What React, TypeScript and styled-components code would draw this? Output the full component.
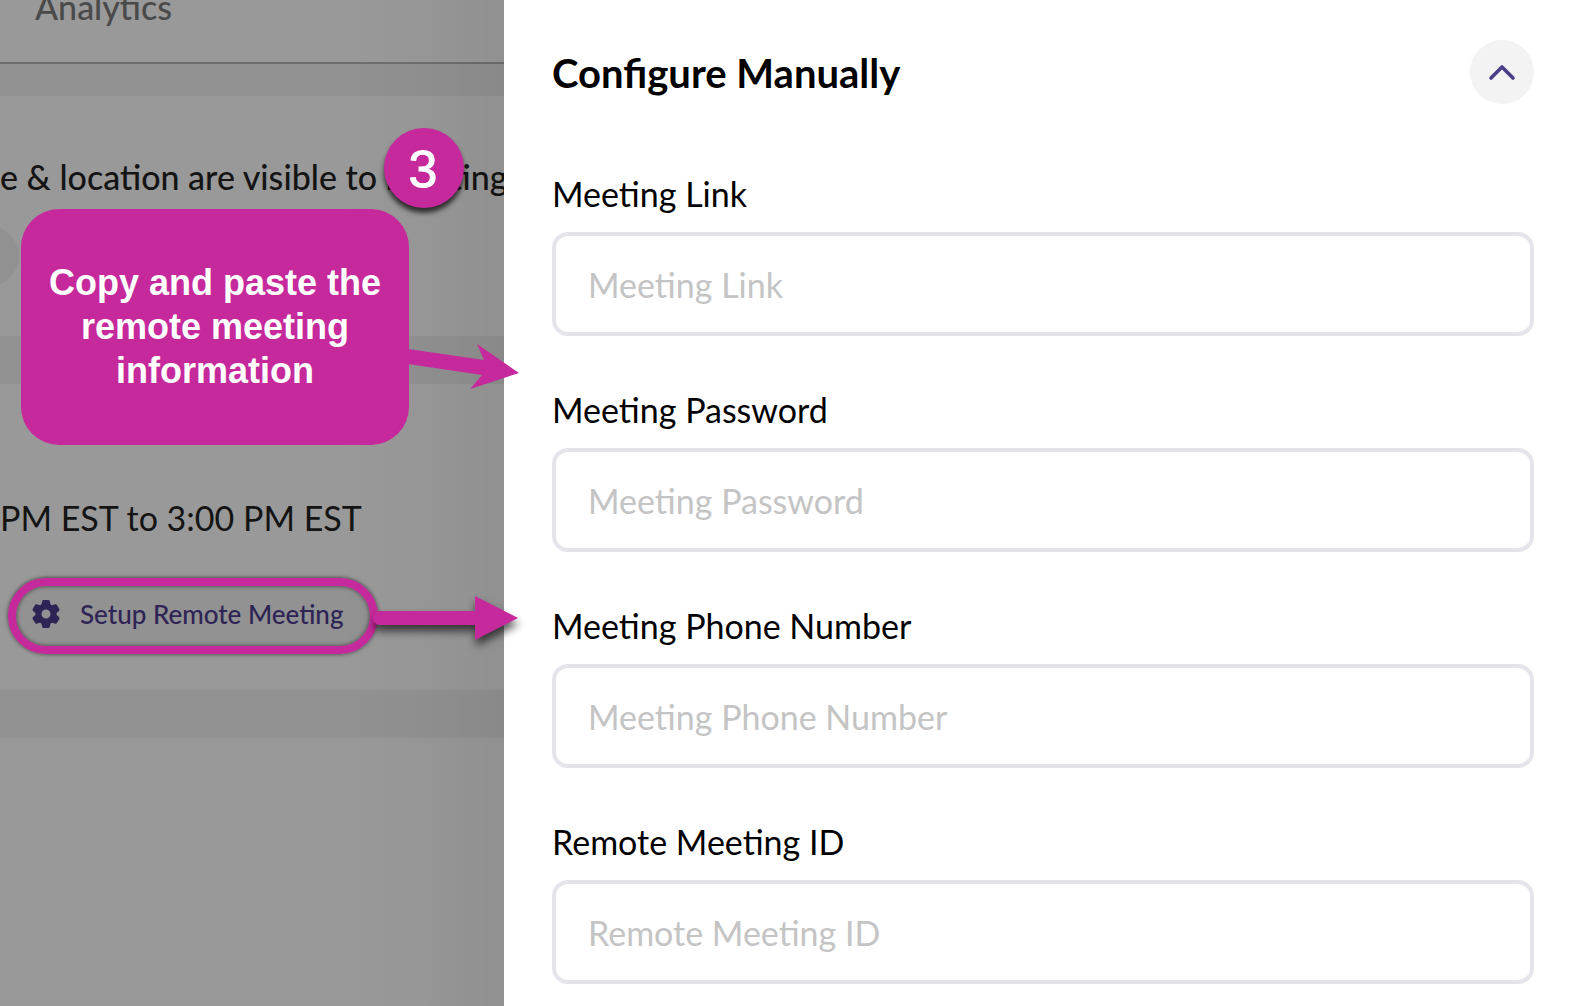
import React from "react";
import styled, { createGlobalStyle } from "styled-components";

const accent = "#c6299b";

const GlobalStyle = createGlobalStyle`
  *, *::before, *::after { box-sizing: border-box; }
  body {
    margin: 0;
    background: #fff;
    font-family: Lato, "Open Sans", sans-serif;
  }
`;

const Page = styled.div`
  position: relative;
  display: grid;
  grid-template-columns: 504px minmax(0, 1fr);
  min-height: 100vh;
  overflow: hidden;
`;

const Backdrop = styled.main`
  position: relative;
  display: flex;
  flex-direction: column;
  min-width: 0;
  overflow: hidden;
  background: #999;
  color: #141414;

  &::after {
    content: "";
    position: absolute;
    inset: 0 0 0 auto;
    width: 170px;
    background: linear-gradient(to right, transparent, rgba(0, 0, 0, 0.02) 50%, rgba(0, 0, 0, 0.06));
    pointer-events: none;
  }
`;

const TabBar = styled.nav`
  height: 64px;
  padding-left: 35px;
  border-bottom: 2px solid #6e6e6e;
`;

const Tab = styled.a`
  display: block;
  margin-top: -15px;
  font-size: 34px;
  line-height: 44px;
  font-weight: 500;
  color: #4a4a4a;
  text-decoration: none;
`;

const Band = styled.div<{ $height: number }>`
  flex: none;
  height: ${(p) => p.$height}px;
  background: #919191;
`;

const Section = styled.section<{ $height: number }>`
  flex: none;
  height: ${(p) => p.$height}px;
  overflow: hidden;
`;

const Line = styled.p<{ $top: number; $weight: number }>`
  margin: 0;
  padding-top: ${(p) => p.$top}px;
  font-size: 34px;
  line-height: 44px;
  font-weight: ${(p) => p.$weight};
  white-space: nowrap;
`;

const RoundToggle = styled.button`
  display: block;
  width: 60px;
  height: 60px;
  margin: 27px 0 0 -41px;
  border: 0;
  border-radius: 50%;
  background: #919191;
`;

const SetupButton = styled.button`
  display: flex;
  align-items: center;
  gap: 20px;
  width: 370px;
  height: 76px;
  margin: 36px 0 0 8px;
  padding: 0 24px;
  border: 0;
  border-radius: 38px;
  background: #929292;
  color: #2e2455;
  font: 500 26px/32px Lato, "Open Sans", sans-serif;
  white-space: nowrap;
`;

const Drawer = styled.aside`
  min-width: 0;
  padding: 40px 40px 22px 48px;
  background: #fff;
`;

const DrawerHeader = styled.header`
  display: flex;
  align-items: center;
  justify-content: space-between;
  height: 64px;
`;

const Title = styled.h2`
  margin: 0;
  padding-top: 2px;
  font-size: 40px;
  line-height: 48px;
  font-weight: 700;
  color: #000;
`;

const CollapseButton = styled.button`
  display: flex;
  align-items: center;
  justify-content: center;
  width: 64px;
  height: 64px;
  padding: 0;
  border: 0;
  border-radius: 50%;
  background: #f3f3f3;
  color: #4a3f87;
`;

const Form = styled.form`
  display: flex;
  flex-direction: column;
  gap: 52px;
  margin-top: 68px;
`;

const Field = styled.div`
  display: flex;
  flex-direction: column;
  gap: 16px;
`;

const Label = styled.label`
  font-size: 34px;
  line-height: 44px;
  color: #000;
`;

const Input = styled.input`
  width: 100%;
  height: 104px;
  padding: 0 32px;
  border: 4px solid #e5e4eb;
  border-radius: 16px;
  background: #fff;
  color: #000;
  font: 400 34px/44px Lato, "Open Sans", sans-serif;
  &::placeholder { color: #c4c4c4; opacity: 1; }
`;

const Callout = styled.div`
  position: absolute;
  left: 21px;
  top: 209px;
  display: flex;
  align-items: center;
  justify-content: center;
  width: 388px;
  height: 236px;
  border-radius: 38px;
  background: ${accent};
  color: #fff;
  font: 700 36px/44px "Liberation Sans", Arial, sans-serif;
  text-align: center;
`;

const StepBadge = styled.div`
  position: absolute;
  left: 384px;
  top: 128px;
  display: flex;
  align-items: center;
  justify-content: center;
  width: 80px;
  height: 80px;
  padding: 2px 2px 0 0;
  border-radius: 50%;
  background: ${accent};
  box-shadow: 0 5px 5px rgba(0, 0, 0, 0.7);
  color: #fff;
  font: 400 52px/60px "Liberation Sans", Arial, sans-serif;
  -webkit-text-stroke: 1px #fff;
`;

const Highlight = styled.div`
  position: absolute;
  left: 8px;
  top: 578px;
  width: 370px;
  height: 76px;
  border: 8px solid ${accent};
  border-radius: 38px;
  box-shadow: 0 0 4px rgba(0, 0, 0, 0.6), inset 0 0 4px rgba(0, 0, 0, 0.6);
  pointer-events: none;
`;

const Arrows = styled.svg`
  position: absolute;
  left: 360px;
  top: 330px;
  pointer-events: none;
`;

const StraightArrow = styled.path`
  filter: drop-shadow(1px 6px 4px rgba(0, 0, 0, 0.65));
`;

const GearIcon = () => (
  <svg width="28" height="28" viewBox="-14 -14 28 28" fill="currentColor" aria-hidden="true">
    <circle r="7.5" fill="none" stroke="currentColor" strokeWidth="6" />
    {[0, 60, 120, 180, 240, 300].map((angle) => (
      <path
        key={angle}
        transform={`rotate(${angle})`}
        d="M-5 -8 -3.700 -13Q-3.400 -14 -2.400 -14H2.400Q3.400 -14 3.700 -13L5 -8Z"
      />
    ))}
  </svg>
);

const fields = ["Meeting Link", "Meeting Password", "Meeting Phone Number", "Remote Meeting ID"];

export default function App() {
  return (
    <>
      <GlobalStyle />
      <Page>
        <Backdrop>
          <TabBar>
            <Tab href="#analytics">Analytics</Tab>
          </TabBar>
          <Band $height={32} />
          <Section $height={240}>
            <Line $top={59} $weight={500}>e &amp; location are visible to meeting</Line>
            <RoundToggle type="button" aria-label="Options" />
          </Section>
          <Band $height={48} />
          <Section $height={306}>
            <Line $top={112} $weight={400}>PM EST to 3:00 PM EST</Line>
            <SetupButton type="button">
              <GearIcon />
              Setup Remote Meeting
            </SetupButton>
          </Section>
          <Band $height={48} />
        </Backdrop>
        <Drawer>
          <DrawerHeader>
            <Title>Configure Manually</Title>
            <CollapseButton type="button" aria-label="Collapse">
              <svg width="28" height="18" viewBox="0 0 28 18" fill="none" stroke="currentColor" strokeWidth="3.600" strokeLinecap="round" strokeLinejoin="round" aria-hidden="true">
                <path d="M3 15 14 4l11 11" />
              </svg>
            </CollapseButton>
          </DrawerHeader>
          <Form>
            {fields.map((name) => {
              const id = name.toLowerCase().replace(/ /g, "-");
              return (
                <Field key={id}>
                  <Label htmlFor={id}>{name}</Label>
                  <Input id={id} type="text" placeholder={name} />
                </Field>
              );
            })}
          </Form>
        </Drawer>
        <StepBadge>3</StepBadge>
        <Callout>
          Copy and paste the
          <br />
          remote meeting
          <br />
          information
        </Callout>
        <Highlight />
        <Arrows width="180" height="330" viewBox="360 330 180 330" fill={accent} aria-hidden="true">
          <path d="M408 349 484 360 477 344 519 373 470 389 482 375 408 364Z" />
          <StraightArrow d="M380 611H475V596L518 618 475 640V625H380A7 7 0 0 1 380 611Z" />
        </Arrows>
      </Page>
    </>
  );
}
